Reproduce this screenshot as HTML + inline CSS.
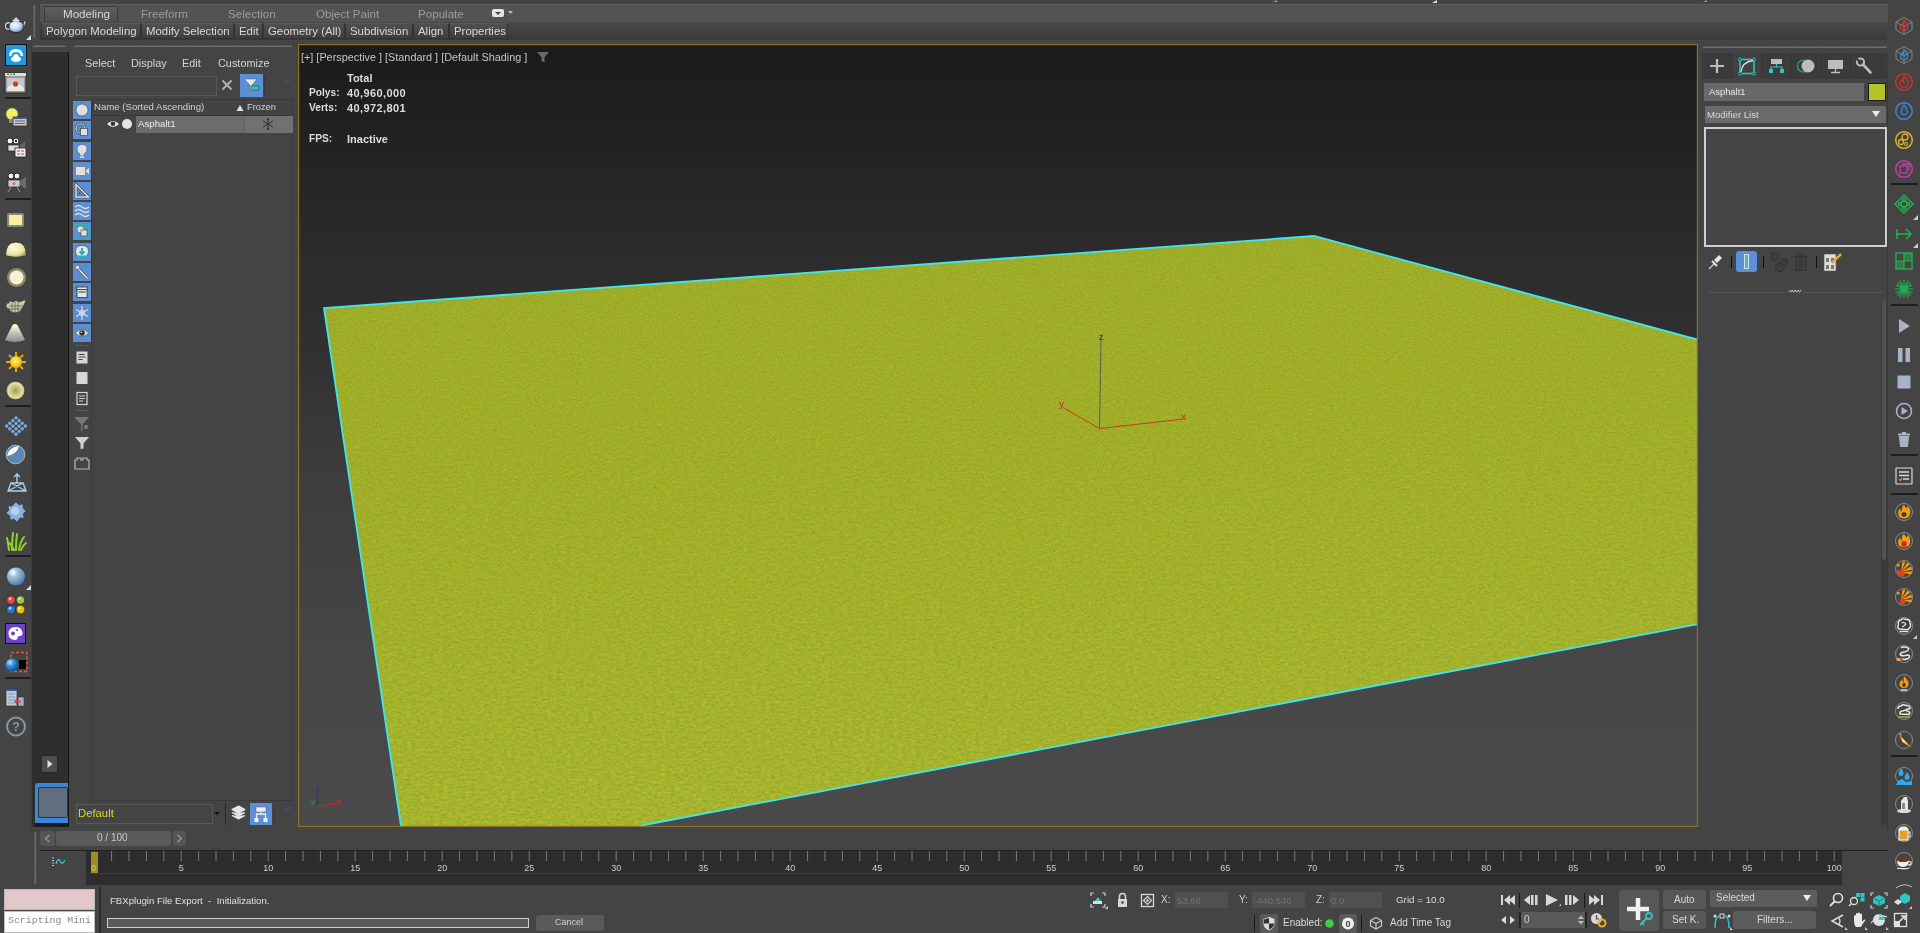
<!DOCTYPE html>
<html><head><meta charset="utf-8">
<style>
*{box-sizing:border-box;margin:0;padding:0}
html,body{width:1920px;height:933px;overflow:hidden;background:#444;font-family:"Liberation Sans",sans-serif;color:#ccc}
.a{position:absolute}
.t{position:absolute;white-space:pre;line-height:1}
</style></head><body>
<div class="a" style="left:40px;top:4px;width:1849px;height:18px;background:#535353"></div>
<div class="a" style="left:40px;top:4px;width:1849px;height:1px;background:#5e5e5e"></div>
<svg class="a" style="left:1432px;top:0px;" width="5" height="3" viewBox="0 0 5 3"><path d="M5 0V3H0Z" fill="#ddd"/></svg>
<svg class="a" style="left:1273px;top:0px;" width="4" height="2" viewBox="0 0 4 2"><path d="M4 0V2H0Z" fill="#999"/></svg>
<svg class="a" style="left:1703px;top:0px;" width="4" height="2" viewBox="0 0 4 2"><path d="M4 0V2H0Z" fill="#999"/></svg>
<div class="a" style="left:44px;top:6px;width:74px;height:16px;background:linear-gradient(#5f5f5f,#4d4d4d);border:1px solid #3c3c3c;border-bottom:none"></div>
<div class="a" style="left:40px;top:22px;width:1847px;height:18px;background:linear-gradient(#4b4b4b,#383838)"></div>
<div class="t" style="left:63px;top:8px;font-size:11.6px;color:#d6d6d6;">Modeling</div>
<div class="t" style="left:141px;top:8px;font-size:11.6px;color:#9c9c9c;">Freeform</div>
<div class="t" style="left:228px;top:8px;font-size:11.6px;color:#9c9c9c;">Selection</div>
<div class="t" style="left:316px;top:8px;font-size:11.6px;color:#9c9c9c;">Object Paint</div>
<div class="t" style="left:418px;top:8px;font-size:11.6px;color:#9c9c9c;">Populate</div>
<svg class="a" style="left:491px;top:8px;" width="22" height="10" viewBox="0 0 22 10"><rect x="1" y="1" width="12" height="8" rx="2" fill="#e6e6e6"/><path d="M4 4h6l-3 3z" fill="#444"/><path d="M17 3h5l-2.5 3z" fill="#bbb"/></svg>
<div class="a" style="left:41px;top:23px;width:100px;height:16px;background:linear-gradient(#505050,#3e3e3e);border:1px solid #333;border-top-color:#585858"></div>
<div class="t" style="left:46px;top:26px;font-size:11.4px;color:#d8d8d8;">Polygon Modeling</div>
<div class="a" style="left:141px;top:23px;width:93px;height:16px;background:linear-gradient(#505050,#3e3e3e);border:1px solid #333;border-top-color:#585858"></div>
<div class="t" style="left:146px;top:26px;font-size:11.4px;color:#d8d8d8;">Modify Selection</div>
<div class="a" style="left:234px;top:23px;width:29px;height:16px;background:linear-gradient(#505050,#3e3e3e);border:1px solid #333;border-top-color:#585858"></div>
<div class="t" style="left:239px;top:26px;font-size:11.4px;color:#d8d8d8;">Edit</div>
<div class="a" style="left:263px;top:23px;width:82px;height:16px;background:linear-gradient(#505050,#3e3e3e);border:1px solid #333;border-top-color:#585858"></div>
<div class="t" style="left:268px;top:26px;font-size:11.4px;color:#d8d8d8;">Geometry (All)</div>
<div class="a" style="left:345px;top:23px;width:68px;height:16px;background:linear-gradient(#505050,#3e3e3e);border:1px solid #333;border-top-color:#585858"></div>
<div class="t" style="left:350px;top:26px;font-size:11.4px;color:#d8d8d8;">Subdivision</div>
<div class="a" style="left:413px;top:23px;width:36px;height:16px;background:linear-gradient(#505050,#3e3e3e);border:1px solid #333;border-top-color:#585858"></div>
<div class="t" style="left:418px;top:26px;font-size:11.4px;color:#d8d8d8;">Align</div>
<div class="a" style="left:449px;top:23px;width:59px;height:16px;background:linear-gradient(#505050,#3e3e3e);border:1px solid #333;border-top-color:#585858"></div>
<div class="t" style="left:454px;top:26px;font-size:11.4px;color:#d8d8d8;">Properties</div>
<svg class="a" style="left:33px;top:5px;" width="3" height="33" viewBox="0 0 3 33"><path d="M0.5 0 L2 1.5 L0.5 3 L2 4.5 L0.5 6 L2 7.5 L0.5 9 L2 10.5 L0.5 12 L2 13.5 L0.5 15 L2 16.5 L0.5 18 L2 19.5 L0.5 21 L2 22.5 L0.5 24 L2 25.5 L0.5 27 L2 28.5 L0.5 30 L2 31.5 L0.5 33" fill="none" stroke="#9a9a9a" stroke-width="0.8"/></svg>
<svg class="a" style="left:33px;top:45px;" width="33" height="3" viewBox="0 0 33 3"><path d="M0 0.5 L1.5 2 L3 0.5 L4.5 2 L6 0.5 L7.5 2 L9 0.5 L10.5 2 L12 0.5 L13.5 2 L15 0.5 L16.5 2 L18 0.5 L19.5 2 L21 0.5 L22.5 2 L24 0.5 L25.5 2 L27 0.5 L28.5 2 L30 0.5 L31.5 2 L33 0.5" fill="none" stroke="#9a9a9a" stroke-width="0.8"/></svg>
<svg class="a" style="left:74px;top:45px;" width="218" height="3" viewBox="0 0 218 3"><path d="M0 0.5 L1.5 2 L3 0.5 L4.5 2 L6 0.5 L7.5 2 L9 0.5 L10.5 2 L12 0.5 L13.5 2 L15 0.5 L16.5 2 L18 0.5 L19.5 2 L21 0.5 L22.5 2 L24 0.5 L25.5 2 L27 0.5 L28.5 2 L30 0.5 L31.5 2 L33 0.5 L34.5 2 L36 0.5 L37.5 2 L39 0.5 L40.5 2 L42 0.5 L43.5 2 L45 0.5 L46.5 2 L48 0.5 L49.5 2 L51 0.5 L52.5 2 L54 0.5 L55.5 2 L57 0.5 L58.5 2 L60 0.5 L61.5 2 L63 0.5 L64.5 2 L66 0.5 L67.5 2 L69 0.5 L70.5 2 L72 0.5 L73.5 2 L75 0.5 L76.5 2 L78 0.5 L79.5 2 L81 0.5 L82.5 2 L84 0.5 L85.5 2 L87 0.5 L88.5 2 L90 0.5 L91.5 2 L93 0.5 L94.5 2 L96 0.5 L97.5 2 L99 0.5 L100.5 2 L102 0.5 L103.5 2 L105 0.5 L106.5 2 L108 0.5 L109.5 2 L111 0.5 L112.5 2 L114 0.5 L115.5 2 L117 0.5 L118.5 2 L120 0.5 L121.5 2 L123 0.5 L124.5 2 L126 0.5 L127.5 2 L129 0.5 L130.5 2 L132 0.5 L133.5 2 L135 0.5 L136.5 2 L138 0.5 L139.5 2 L141 0.5 L142.5 2 L144 0.5 L145.5 2 L147 0.5 L148.5 2 L150 0.5 L151.5 2 L153 0.5 L154.5 2 L156 0.5 L157.5 2 L159 0.5 L160.5 2 L162 0.5 L163.5 2 L165 0.5 L166.5 2 L168 0.5 L169.5 2 L171 0.5 L172.5 2 L174 0.5 L175.5 2 L177 0.5 L178.5 2 L180 0.5 L181.5 2 L183 0.5 L184.5 2 L186 0.5 L187.5 2 L189 0.5 L190.5 2 L192 0.5 L193.5 2 L195 0.5 L196.5 2 L198 0.5 L199.5 2 L201 0.5 L202.5 2 L204 0.5 L205.5 2 L207 0.5 L208.5 2 L210 0.5 L211.5 2 L213 0.5 L214.5 2 L216 0.5 L217.5 2 L219 0.5" fill="none" stroke="#9a9a9a" stroke-width="0.8"/></svg>
<svg class="a" style="left:1703px;top:46px;" width="184" height="3" viewBox="0 0 184 3"><path d="M0 0.5 L1.5 2 L3 0.5 L4.5 2 L6 0.5 L7.5 2 L9 0.5 L10.5 2 L12 0.5 L13.5 2 L15 0.5 L16.5 2 L18 0.5 L19.5 2 L21 0.5 L22.5 2 L24 0.5 L25.5 2 L27 0.5 L28.5 2 L30 0.5 L31.5 2 L33 0.5 L34.5 2 L36 0.5 L37.5 2 L39 0.5 L40.5 2 L42 0.5 L43.5 2 L45 0.5 L46.5 2 L48 0.5 L49.5 2 L51 0.5 L52.5 2 L54 0.5 L55.5 2 L57 0.5 L58.5 2 L60 0.5 L61.5 2 L63 0.5 L64.5 2 L66 0.5 L67.5 2 L69 0.5 L70.5 2 L72 0.5 L73.5 2 L75 0.5 L76.5 2 L78 0.5 L79.5 2 L81 0.5 L82.5 2 L84 0.5 L85.5 2 L87 0.5 L88.5 2 L90 0.5 L91.5 2 L93 0.5 L94.5 2 L96 0.5 L97.5 2 L99 0.5 L100.5 2 L102 0.5 L103.5 2 L105 0.5 L106.5 2 L108 0.5 L109.5 2 L111 0.5 L112.5 2 L114 0.5 L115.5 2 L117 0.5 L118.5 2 L120 0.5 L121.5 2 L123 0.5 L124.5 2 L126 0.5 L127.5 2 L129 0.5 L130.5 2 L132 0.5 L133.5 2 L135 0.5 L136.5 2 L138 0.5 L139.5 2 L141 0.5 L142.5 2 L144 0.5 L145.5 2 L147 0.5 L148.5 2 L150 0.5 L151.5 2 L153 0.5 L154.5 2 L156 0.5 L157.5 2 L159 0.5 L160.5 2 L162 0.5 L163.5 2 L165 0.5 L166.5 2 L168 0.5 L169.5 2 L171 0.5 L172.5 2 L174 0.5 L175.5 2 L177 0.5 L178.5 2 L180 0.5 L181.5 2 L183 0.5 L184.5 2 L186 0.5" fill="none" stroke="#9a9a9a" stroke-width="0.8"/></svg>
<svg class="a" style="left:1891px;top:4px;" width="26" height="3" viewBox="0 0 26 3"><path d="M0 0.5 L1.5 2 L3 0.5 L4.5 2 L6 0.5 L7.5 2 L9 0.5 L10.5 2 L12 0.5 L13.5 2 L15 0.5 L16.5 2 L18 0.5 L19.5 2 L21 0.5 L22.5 2 L24 0.5 L25.5 2 L27 0.5" fill="none" stroke="#9a9a9a" stroke-width="0.8"/></svg>
<div class="a" style="left:25px;top:52px;width:1px;height:780px;background:#474747"></div>
<div class="a" style="left:31px;top:40px;width:1px;height:793px;background:#3c3c3c"></div>
<div class="a" style="left:5px;top:97px;width:26px;height:2px;background:#1e1e1e"></div>
<div class="a" style="left:5px;top:198px;width:26px;height:2px;background:#1e1e1e"></div>
<div class="a" style="left:5px;top:405px;width:26px;height:2px;background:#1e1e1e"></div>
<div class="a" style="left:5px;top:555px;width:26px;height:2px;background:#1e1e1e"></div>
<div class="a" style="left:5px;top:677px;width:26px;height:2px;background:#1e1e1e"></div>
<svg class="a" style="left:0;top:0" width="0" height="0"><defs>
<radialGradient id="gTea" cx="40%" cy="35%" r="70%"><stop offset="0" stop-color="#ffffff"/><stop offset="0.6" stop-color="#b8d0ec"/><stop offset="1" stop-color="#5d7fa8"/></radialGradient>
<radialGradient id="gYel" cx="40%" cy="35%" r="70%"><stop offset="0" stop-color="#fffde0"/><stop offset="0.7" stop-color="#e8e2a0"/><stop offset="1" stop-color="#9a9460"/></radialGradient>
<radialGradient id="gYel2" cx="50%" cy="50%" r="50%"><stop offset="0" stop-color="#a09c60"/><stop offset="0.8" stop-color="#e9e2a0"/><stop offset="1" stop-color="#7a7550"/></radialGradient>
<radialGradient id="gBlu" cx="35%" cy="30%" r="70%"><stop offset="0" stop-color="#ffffff"/><stop offset="0.35" stop-color="#9ec0dc"/><stop offset="1" stop-color="#4f7ea8"/></radialGradient>
<radialGradient id="gBlu2" cx="35%" cy="30%" r="70%"><stop offset="0" stop-color="#c8e8ff"/><stop offset="0.4" stop-color="#3b93e0"/><stop offset="1" stop-color="#0c4fa0"/></radialGradient>
<radialGradient id="gSun" cx="45%" cy="40%" r="60%"><stop offset="0" stop-color="#fff27a"/><stop offset="1" stop-color="#f0b000"/></radialGradient>
<linearGradient id="gCone" x1="0" y1="0" x2="0" y2="1"><stop offset="0" stop-color="#ffffe8"/><stop offset="1" stop-color="#8a8a8a"/></linearGradient>
</defs></svg>
<svg class="a" style="left:4px;top:17px;" width="24" height="18" viewBox="0 0 24 18"><ellipse cx="4.5" cy="9" rx="3" ry="3.3" fill="none" stroke="#222" stroke-width="2.6"/><ellipse cx="4.5" cy="9" rx="3" ry="3.3" fill="none" stroke="#c8d4e0" stroke-width="1.4"/><path d="M16 11 Q19 9 20 4 L22.5 3 Q21.5 9 17 14Z" fill="url(#gTea)" stroke="#222" stroke-width="0.7"/><path d="M5 9 Q5 4 12 4 Q19.5 4 19.5 9 Q19.5 15.5 12 15.5 Q5 15.5 5 9Z" fill="url(#gTea)" stroke="#222" stroke-width="0.8"/><ellipse cx="12" cy="3.5" rx="3.5" ry="1.2" fill="#dfe8f2"/><circle cx="12" cy="1.8" r="1.3" fill="#cfdcec"/></svg>
<svg class="a" style="left:26px;top:35px;" width="5" height="5" viewBox="0 0 5 5"><path d="M5 0V5H0Z" fill="#ddd"/></svg>
<svg class="a" style="left:5px;top:44px;" width="22" height="22" viewBox="0 0 22 22"><rect x="0.5" y="0.5" width="21" height="21" fill="#1d9be0" stroke="#111" stroke-width="1"/><path d="M4 12 Q4 5 11 5 Q18 5 18 12 L15.5 12 Q15.5 8 11 8 Q6.5 8 6.5 12Z" fill="#fff"/><ellipse cx="11" cy="15" rx="5" ry="3" fill="#fff"/><circle cx="11" cy="12.5" r="2.5" fill="#fff"/></svg>
<svg class="a" style="left:4px;top:72px;" width="23" height="23" viewBox="0 0 23 23"><rect x="1" y="1" width="21" height="20" fill="#9a9a9a" stroke="#2a2a2a"/><rect x="1" y="1" width="21" height="3" fill="#e0e0e0"/><rect x="3" y="1.5" width="2" height="1.5" fill="#e33"/><rect x="6" y="1.5" width="2" height="1.5" fill="#3c3"/><rect x="9" y="1.5" width="2" height="1.5" fill="#36e"/><path d="M3 6h17v13H3z" fill="#c4c8cc"/><path d="M3 16 L8 12 H15 L20 16 V19 H3Z" fill="#e8e8e8"/><circle cx="11.5" cy="12" r="2.6" fill="#d63a1e"/></svg>
<svg class="a" style="left:4px;top:107px;" width="24" height="22" viewBox="0 0 24 22"><circle cx="8" cy="7" r="6" fill="#f3ee60" stroke="#777" stroke-width="0.6"/><path d="M5 12h6v4H5z" fill="#888"/><rect x="9" y="10" width="14" height="9" fill="#c9c9c9" stroke="#333" stroke-width="0.8"/><rect x="9" y="10" width="14" height="2" fill="#3a5aa0"/><path d="M11 14h10M11 16.5h10" stroke="#666" stroke-width="1"/></svg>
<svg class="a" style="left:4px;top:136px;" width="24" height="22" viewBox="0 0 24 22"><circle cx="6" cy="5" r="3" fill="#fff" stroke="#222"/><circle cx="12" cy="5" r="3" fill="#fff" stroke="#222"/><circle cx="12" cy="5" r="1.2" fill="#222"/><rect x="4" y="9" width="11" height="6" fill="#ddd" stroke="#222" stroke-width="0.7"/><path d="M16 9 L21 6 V15 L16 12Z" fill="#666"/><rect x="11" y="12" width="11" height="9" fill="#eee" stroke="#222" stroke-width="0.8"/><path d="M13 15h3M17 15h3M13 18h3M17 18h3" stroke="#c44" stroke-width="1"/></svg>
<svg class="a" style="left:4px;top:171px;" width="24" height="22" viewBox="0 0 24 22"><circle cx="7" cy="5" r="3" fill="#eee" stroke="#222"/><circle cx="13" cy="5" r="3" fill="#eee" stroke="#222"/><rect x="4" y="9" width="12" height="7" fill="#ccc" stroke="#222" stroke-width="0.7"/><path d="M16 10 L22 6 V18 L16 14Z" fill="#6a6a6a"/><path d="M7 16 L4 21 M13 16 L16 21" stroke="#999" stroke-width="1"/><circle cx="10" cy="12.5" r="1.5" fill="#d66"/></svg>
<svg class="a" style="left:5px;top:211px;" width="22" height="18" viewBox="0 0 22 18"><rect x="2" y="2" width="17" height="14" fill="#8a8a70" rx="2"/><rect x="4" y="4" width="13" height="10" fill="#f6efa0"/></svg>
<svg class="a" style="left:4px;top:240px;" width="24" height="19" viewBox="0 0 24 19"><path d="M1.5 16 Q1.5 2 12 2 Q22.5 2 22.5 16 Q12 19 1.5 16Z" fill="url(#gYel)" stroke="#222" stroke-width="0.8"/></svg>
<svg class="a" style="left:6px;top:267px;" width="21" height="21" viewBox="0 0 21 21"><circle cx="10.5" cy="10.5" r="9.5" fill="#8a8a70"/><circle cx="10.5" cy="10.5" r="7" fill="#f7f3d0"/></svg>
<svg class="a" style="left:4px;top:298px;" width="24" height="17" viewBox="0 0 24 17"><path d="M5 5 Q4 2 7 3 L9 4 Q12 1 15 4 L20 2 Q23 2 21 5 L18 11 Q16 15 11 15 Q6 15 5 11 Q1 10 2 7 Q3 4 5 5Z" fill="#cfc9a8" stroke="#333" stroke-width="0.8"/><path d="M8 5V14M11 4V15M14 5V14M5 8h15M5 11h14" stroke="#555" stroke-width="0.7"/></svg>
<svg class="a" style="left:4px;top:322px;" width="22" height="22" viewBox="0 0 22 22"><path d="M11 2 Q9 2 8 4 L1 18 Q11 22 21 18 L14 4 Q13 2 11 2Z" fill="url(#gCone)"/><circle cx="11" cy="4" r="2" fill="#fff8c0"/></svg>
<svg class="a" style="left:5px;top:351px;" width="22" height="22" viewBox="0 0 22 22"><g stroke="#e8a800" stroke-width="2"><path d="M11 1V5M11 17V21M1 11H5M17 11H21M4 4L6.5 6.5M15.5 15.5L18 18M18 4L15.5 6.5M6.5 15.5L4 18"/></g><circle cx="11" cy="11" r="6" fill="url(#gSun)"/></svg>
<svg class="a" style="left:5px;top:380px;" width="21" height="21" viewBox="0 0 21 21"><circle cx="10.5" cy="10.5" r="9.5" fill="url(#gYel2)" stroke="#333" stroke-width="0.7"/></svg>
<svg class="a" style="left:4px;top:415px;" width="24" height="22" viewBox="0 0 24 22"><circle cx="12.0" cy="3.0" r="2.1" fill="#86aed4" stroke="#2a3a4a" stroke-width="0.6"/><circle cx="15.1" cy="5.7" r="2.1" fill="#86aed4" stroke="#2a3a4a" stroke-width="0.6"/><circle cx="18.2" cy="8.4" r="2.1" fill="#86aed4" stroke="#2a3a4a" stroke-width="0.6"/><circle cx="21.3" cy="11.1" r="2.1" fill="#86aed4" stroke="#2a3a4a" stroke-width="0.6"/><circle cx="8.9" cy="5.7" r="2.1" fill="#86aed4" stroke="#2a3a4a" stroke-width="0.6"/><circle cx="12.0" cy="8.4" r="2.1" fill="#86aed4" stroke="#2a3a4a" stroke-width="0.6"/><circle cx="15.1" cy="11.1" r="2.1" fill="#86aed4" stroke="#2a3a4a" stroke-width="0.6"/><circle cx="18.2" cy="13.8" r="2.1" fill="#86aed4" stroke="#2a3a4a" stroke-width="0.6"/><circle cx="5.8" cy="8.4" r="2.1" fill="#86aed4" stroke="#2a3a4a" stroke-width="0.6"/><circle cx="8.9" cy="11.1" r="2.1" fill="#86aed4" stroke="#2a3a4a" stroke-width="0.6"/><circle cx="12.0" cy="13.8" r="2.1" fill="#86aed4" stroke="#2a3a4a" stroke-width="0.6"/><circle cx="15.1" cy="16.5" r="2.1" fill="#86aed4" stroke="#2a3a4a" stroke-width="0.6"/><circle cx="2.7" cy="11.1" r="2.1" fill="#86aed4" stroke="#2a3a4a" stroke-width="0.6"/><circle cx="5.8" cy="13.8" r="2.1" fill="#86aed4" stroke="#2a3a4a" stroke-width="0.6"/><circle cx="8.9" cy="16.5" r="2.1" fill="#86aed4" stroke="#2a3a4a" stroke-width="0.6"/><circle cx="12.0" cy="19.2" r="2.1" fill="#86aed4" stroke="#2a3a4a" stroke-width="0.6"/></svg>
<svg class="a" style="left:5px;top:444px;" width="21" height="21" viewBox="0 0 21 21"><circle cx="10.5" cy="10.5" r="9.3" fill="#5a88b0" stroke="#ccc" stroke-width="0.8"/><path d="M2 12 Q4 3 14 2 Q12 10 2 12Z" fill="#fff"/></svg>
<svg class="a" style="left:6px;top:472px;" width="22" height="22" viewBox="0 0 22 22"><g stroke="#a8d0ee" stroke-width="1.4" fill="none"><path d="M2 19 H20 L17 11 H5Z M5 11 L20 19 M17 11 L2 19 M11 2 V11 M8 5 L11 2 L14 5"/></g></svg>
<svg class="a" style="left:5px;top:501px;" width="22" height="22" viewBox="0 0 22 22"><path d="M11 1 L14 4 L18 3 L18 7 L21 10 L18 13 L19 17 L15 17 L12 21 L9 18 L5 19 L5 15 L1 12 L4 9 L3 5 L7 5Z" fill="#8bb0e0" stroke="#333" stroke-width="0.5"/><circle cx="10" cy="10" r="4" fill="#b8d0f0"/></svg>
<svg class="a" style="left:5px;top:530px;" width="22" height="22" viewBox="0 0 22 22"><g stroke="#8fd32a" stroke-width="2" fill="none" stroke-linecap="round"><path d="M4 20 Q3 12 2 8 M7 20 Q7 10 8 3 M11 20 Q11 12 12 4 M14 20 Q15 12 19 7 M9 20 Q6 14 4 13 M16 20 Q18 15 21 13"/></g></svg>
<svg class="a" style="left:5px;top:566px;" width="22" height="22" viewBox="0 0 22 22"><circle cx="11" cy="10.5" r="9.5" fill="url(#gBlu)" stroke="#333" stroke-width="0.7"/></svg>
<svg class="a" style="left:26px;top:585px;" width="5" height="5" viewBox="0 0 5 5"><path d="M5 0V5H0Z" fill="#ddd"/></svg>
<svg class="a" style="left:6px;top:595px;" width="20" height="20" viewBox="0 0 20 20"><circle cx="5" cy="5" r="4.3" fill="#e84848" stroke="#222" stroke-width="0.6"/><circle cx="14.5" cy="5" r="4.3" fill="#9cc040" stroke="#222" stroke-width="0.6"/><circle cx="5" cy="14.5" r="4.3" fill="#2a78d8" stroke="#222" stroke-width="0.6"/><circle cx="14.5" cy="14.5" r="4.3" fill="#f0c000" stroke="#222" stroke-width="0.6"/><circle cx="4" cy="3.8" r="1.3" fill="#fff" opacity="0.8"/><circle cx="13.5" cy="3.8" r="1.3" fill="#fff" opacity="0.7"/><circle cx="4" cy="13.3" r="1.3" fill="#fff" opacity="0.7"/><circle cx="13.5" cy="13.3" r="1.3" fill="#fff" opacity="0.7"/></svg>
<svg class="a" style="left:5px;top:623px;" width="22" height="22" viewBox="0 0 22 22"><rect x="0.5" y="0.5" width="20" height="20" fill="#6b42c4" stroke="#111"/><path d="M10.5 4 Q17 4 17.5 10 Q17.5 13 15 13 Q12 13 12.5 16 Q11 17 10 17 Q3.5 17 3.5 10.5 Q3.5 4 10.5 4Z" fill="#fff"/><circle cx="8" cy="10.5" r="2" fill="#6b42c4"/><circle cx="12" cy="7" r="1" fill="#6b42c4"/></svg>
<svg class="a" style="left:4px;top:651px;" width="24" height="24" viewBox="0 0 24 24"><rect x="7" y="1.5" width="16" height="19" fill="none" stroke="#e53" stroke-width="1.5" stroke-dasharray="3 2"/><rect x="15" y="9" width="7" height="9" fill="#000"/><circle cx="8" cy="14" r="6.5" fill="url(#gBlu2)"/></svg>
<svg class="a" style="left:5px;top:688px;" width="22" height="20" viewBox="0 0 22 20"><rect x="1" y="1" width="11" height="17" fill="#c8c8c8" stroke="#333" stroke-width="0.7"/><rect x="1" y="1" width="11" height="2" fill="#2d5ab8"/><path d="M3 6h7M3 9h7M3 12h7M3 15h7" stroke="#6aa0e0" stroke-width="1"/><rect x="13" y="9" width="6" height="9" fill="#aac" stroke="#333" stroke-width="0.5"/><path d="M16 13.5H10M12 11.5L10 13.5L12 15.5" stroke="#e33" stroke-width="1.5" fill="none"/></svg>
<svg class="a" style="left:5px;top:716px;" width="22" height="22" viewBox="0 0 22 22"><circle cx="11" cy="10.5" r="9" fill="none" stroke="#8a95a0" stroke-width="2"/><text x="11" y="15" text-anchor="middle" font-family="Liberation Sans" font-weight="bold" font-size="13" fill="#8a95a0">?</text></svg>
<div class="a" style="left:32px;top:52px;width:37px;height:775px;background:#2e2e2e"></div>
<div class="a" style="left:68px;top:52px;width:1px;height:775px;background:#141414"></div>
<div class="a" style="left:41px;top:755px;width:17px;height:18px;background:#4d4d4d;border-radius:2px;border:1px solid #272727"></div>
<svg class="a" style="left:41px;top:755px;" width="17" height="18" viewBox="0 0 17 18"><path d="M6.5 5 L11.5 9 L6.5 13Z" fill="#e0e0e0"/></svg>
<div class="a" style="left:35px;top:783px;width:33px;height:42px;background:#3c85d8;border-radius:3px 0 0 0"></div>
<div class="a" style="left:38px;top:787px;width:30px;height:31px;background:#5f6f80;border:1px solid #2a3540;border-radius:2px"></div>
<div class="a" style="left:35px;top:823px;width:33px;height:4px;background:#1c1c1c"></div>
<div class="a" style="left:69px;top:52px;width:227px;height:775px;background:#444"></div>
<div class="t" style="left:85px;top:58px;font-size:10.9px;color:#d4d4d4;">Select</div>
<div class="t" style="left:131px;top:58px;font-size:10.9px;color:#d4d4d4;">Display</div>
<div class="t" style="left:182px;top:58px;font-size:10.9px;color:#d4d4d4;">Edit</div>
<div class="t" style="left:218px;top:58px;font-size:10.9px;color:#d4d4d4;">Customize</div>
<div class="a" style="left:76px;top:76px;width:141px;height:20px;background:#444;border:1px solid #595959"></div>
<svg class="a" style="left:220px;top:78px;" width="14" height="14" viewBox="0 0 14 14"><path d="M2.5 2.5L11.5 11.5M11.5 2.5L2.5 11.5" stroke="#b0b0b0" stroke-width="2"/></svg>
<div class="a" style="left:240px;top:74px;width:23px;height:23px;background:#5b8fd6"></div>
<svg class="a" style="left:240px;top:74px;" width="23" height="23" viewBox="0 0 23 23"><path d="M4 5H17L12 11V16L10 17V11Z" fill="#e8e8e8" stroke="#555" stroke-width="0.5"/><rect x="11" y="12" width="8" height="4" fill="#2bc7c0" stroke="#333" stroke-width="0.5"/></svg>
<div class="a" style="left:264px;top:76px;width:1px;height:20px;background:#3a3a3a"></div>
<div class="t" style="left:284px;top:74px;font-size:12px;color:#434d88;">»</div>
<div class="a" style="left:73px;top:101px;width:18px;height:18px;background:#5b8ed3"></div>
<svg class="a" style="left:73px;top:101px;" width="18" height="18" viewBox="0 0 18 18"><circle cx="9" cy="9" r="6" fill="#e0e0e0" stroke="#444" stroke-width="0.6"/></svg>
<div class="a" style="left:73px;top:121px;width:18px;height:18px;background:#5b8ed3"></div>
<svg class="a" style="left:73px;top:121px;" width="18" height="18" viewBox="0 0 18 18"><circle cx="7.5" cy="7.5" r="4.5" fill="none" stroke="#444" stroke-width="2.4"/><circle cx="7.5" cy="7.5" r="4.5" fill="none" stroke="#e0e0e0" stroke-width="1.2"/><rect x="7.5" y="7.5" width="7" height="7" fill="#e0e0e0" stroke="#444" stroke-width="0.7"/></svg>
<div class="a" style="left:73px;top:142px;width:18px;height:18px;background:#5b8ed3"></div>
<svg class="a" style="left:73px;top:142px;" width="18" height="18" viewBox="0 0 18 18"><path d="M9 2.5 Q14 2.5 14 7 Q14 10 11 12 V14 H7 V12 Q4 10 4 7 Q4 2.5 9 2.5Z" fill="#e0e0e0" stroke="#555" stroke-width="0.5"/><rect x="7" y="14.5" width="4" height="1.5" fill="#e0e0e0"/></svg>
<div class="a" style="left:73px;top:162px;width:18px;height:18px;background:#5b8ed3"></div>
<svg class="a" style="left:73px;top:162px;" width="18" height="18" viewBox="0 0 18 18"><rect x="2.5" y="4.5" width="10" height="9" rx="1" fill="#e0e0e0" stroke="#555" stroke-width="0.5"/><path d="M12.5 9 L16 5.5 V12.5Z" fill="#e0e0e0"/></svg>
<div class="a" style="left:73px;top:182px;width:18px;height:18px;background:#5b8ed3"></div>
<svg class="a" style="left:73px;top:182px;" width="18" height="18" viewBox="0 0 18 18"><path d="M3 2.5 V15 H15.5Z" fill="none" stroke="#333" stroke-width="2.6"/><path d="M3 2.5 V15 H15.5Z" fill="none" stroke="#e8e8e8" stroke-width="1.5"/><path d="M6 10 V12 H8Z" fill="#333"/></svg>
<div class="a" style="left:73px;top:202px;width:18px;height:18px;background:#5b8ed3"></div>
<svg class="a" style="left:73px;top:202px;" width="18" height="18" viewBox="0 0 18 18"><path d="M2 5 Q5.5 2 9 5 T16 5 M2 9 Q5.5 6 9 9 T16 9 M2 13 Q5.5 10 9 13 T16 13" fill="none" stroke="#e0e0e0" stroke-width="1.4"/></svg>
<div class="a" style="left:73px;top:222px;width:18px;height:18px;background:#5b8ed3"></div>
<svg class="a" style="left:73px;top:222px;" width="18" height="18" viewBox="0 0 18 18"><rect x="2.5" y="2.5" width="13" height="13" fill="none" stroke="#27b8a8" stroke-width="1.3"/><circle cx="7.5" cy="7.5" r="3.5" fill="#e0e0e0" stroke="#444" stroke-width="0.5"/><rect x="8" y="8" width="6" height="6" fill="#e0e0e0" stroke="#444" stroke-width="0.6"/></svg>
<div class="a" style="left:73px;top:243px;width:18px;height:18px;background:#5b8ed3"></div>
<svg class="a" style="left:73px;top:243px;" width="18" height="18" viewBox="0 0 18 18"><path d="M4.5 13 Q2.5 11 2.5 8.5 Q2.5 2.5 9 2.5 Q15.5 2.5 15.5 8.5 Q15.5 11 13.5 13" fill="#e6e6e6" stroke="#444" stroke-width="0.6"/><path d="M9 5 V11 M6.5 8.5 L9 11 L11.5 8.5" stroke="#22b8b0" stroke-width="2" fill="none"/><rect x="4.5" y="12.5" width="9" height="2.2" fill="#22b8b0"/></svg>
<div class="a" style="left:73px;top:263px;width:18px;height:18px;background:#5b8ed3"></div>
<svg class="a" style="left:73px;top:263px;" width="18" height="18" viewBox="0 0 18 18"><path d="M4.5 5 L14.5 15.5" stroke="#444" stroke-width="2.8"/><path d="M4.5 5 L14.5 15.5" stroke="#e6e6e6" stroke-width="1.8"/><circle cx="4.5" cy="4.5" r="2.2" fill="#e6e6e6" stroke="#444" stroke-width="0.6"/></svg>
<div class="a" style="left:73px;top:283px;width:18px;height:18px;background:#5b8ed3"></div>
<svg class="a" style="left:73px;top:283px;" width="18" height="18" viewBox="0 0 18 18"><rect x="3.5" y="4" width="11" height="2.5" fill="#e6e6e6" stroke="#333" stroke-width="0.8"/><rect x="4" y="6.5" width="10" height="8" fill="#e6e6e6" stroke="#333" stroke-width="0.8"/><path d="M5.5 9 H12.5" stroke="#333" stroke-width="1"/></svg>
<div class="a" style="left:73px;top:304px;width:18px;height:18px;background:#5b8ed3"></div>
<svg class="a" style="left:73px;top:304px;" width="18" height="18" viewBox="0 0 18 18"><g stroke="#e0e0e0" stroke-width="1.1" fill="none"><path d="M9 2V16M3 5.5L15 12.5M15 5.5L3 12.5"/><circle cx="9" cy="9" r="2.5"/></g></svg>
<div class="a" style="left:73px;top:324px;width:18px;height:18px;background:#5b8ed3"></div>
<svg class="a" style="left:73px;top:324px;" width="18" height="18" viewBox="0 0 18 18"><path d="M2 9 Q9 2 16 9 Q9 16 2 9Z" fill="#e0e0e0" stroke="#333" stroke-width="0.5"/><circle cx="9" cy="9" r="2.8" fill="#333"/><circle cx="8.3" cy="8.3" r="0.8" fill="#fff"/></svg>
<div class="a" style="left:76px;top:345px;width:12px;height:1px;background:#5a5a5a"></div>
<svg class="a" style="left:74px;top:349px;" width="16" height="18" viewBox="0 0 16 18"><rect x="2.5" y="2.5" width="11" height="12" fill="#d6d6d6"/><path d="M4.5 5.5h6M4.5 8h7M4.5 10.5h4" stroke="#444" stroke-width="1.2"/></svg>
<svg class="a" style="left:74px;top:370px;" width="16" height="18" viewBox="0 0 16 18"><rect x="2.5" y="2" width="11" height="12" fill="#d6d6d6"/></svg>
<svg class="a" style="left:74px;top:390px;" width="16" height="18" viewBox="0 0 16 18"><rect x="3" y="2.5" width="10" height="12" fill="none" stroke="#d6d6d6" stroke-width="1.2"/><path d="M5 6h6M5 8.5h6M5 11h4" stroke="#d6d6d6" stroke-width="1.1"/></svg>
<div class="a" style="left:76px;top:410px;width:12px;height:1px;background:#5a5a5a"></div>
<svg class="a" style="left:73px;top:415px;" width="18" height="17" viewBox="0 0 18 17"><path d="M1 2H16L10 9V15L8 16V9Z" fill="#777"/><circle cx="13" cy="12" r="3" fill="#777" stroke="#444" stroke-width="1.5"/></svg>
<svg class="a" style="left:73px;top:436px;" width="18" height="14" viewBox="0 0 18 14"><path d="M2 1H16L10.5 7.5V12.5L7.5 13V7.5Z" fill="#d0d0d0"/></svg>
<svg class="a" style="left:73px;top:455px;" width="18" height="16" viewBox="0 0 18 16"><path d="M2 14V5H4V3H8V5H10V3H14V5H16V14Z" fill="none" stroke="#b8b8b8" stroke-width="1.2"/></svg>
<div class="a" style="left:91px;top:99px;width:202px;height:702px;border:1px solid #3a3a3a;border-top:none"></div>
<div class="a" style="left:92px;top:99px;width:201px;height:17px;background:#434343;border:1px solid #383838"></div>
<div class="t" style="left:94px;top:102px;font-size:9.65px;color:#d4d4d4;">Name (Sorted Ascending)</div>
<svg class="a" style="left:236px;top:104px;" width="8" height="8" viewBox="0 0 8 8"><path d="M4 1 L7.5 7 H0.5Z" fill="#e0e0e0"/></svg>
<div class="a" style="left:244px;top:99px;width:1px;height:17px;background:#383838"></div>
<div class="t" style="left:247px;top:103px;font-size:9.3px;color:#d4d4d4;">Frozen</div>
<div class="a" style="left:136px;top:116px;width:157px;height:17px;background:#6c6c6c"></div>
<div class="a" style="left:244px;top:116px;width:1px;height:17px;background:#606060"></div>
<div class="a" style="left:245px;top:116px;width:48px;height:17px;background:#717171"></div>
<svg class="a" style="left:104px;top:117px;" width="30" height="14" viewBox="0 0 30 14"><path d="M3 7 Q9 1 15 7 Q9 13 3 7Z" fill="#e8e8e8"/><circle cx="9" cy="6.8" r="2.3" fill="#333"/><circle cx="23" cy="7" r="5" fill="#e4e4e4"/></svg>
<div class="t" style="left:138px;top:119px;font-size:9.7px;color:#ececec;">Asphalt1</div>
<svg class="a" style="left:261px;top:117px;" width="14" height="14" viewBox="0 0 14 14"><g stroke="#2e2e2e" stroke-width="1" fill="none"><path d="M7 1V13M2.2 4L11.8 10M11.8 4L2.2 10M5.5 1.5L7 3L8.5 1.5M5.5 12.5L7 11L8.5 12.5"/></g></svg>
<div class="a" style="left:76px;top:804px;width:137px;height:20px;background:#444;border:1px solid #585858"></div>
<div class="t" style="left:78px;top:808px;font-size:11.3px;color:#d8d820;">Default</div>
<svg class="a" style="left:213px;top:809px;" width="8" height="8" viewBox="0 0 8 8"><path d="M1 3H7L4 6Z" fill="#111"/></svg>
<div class="a" style="left:225px;top:803px;width:1px;height:22px;background:#2a2a2a"></div>
<svg class="a" style="left:230px;top:804px;" width="17" height="17" viewBox="0 0 17 17"><path d="M8.5 2L15 5.5L8.5 9L2 5.5Z M2 8.5L8.5 12L15 8.5 M2 11.5L8.5 15L15 11.5" fill="#e6e6e6" stroke="#e6e6e6" stroke-width="1.2" stroke-linejoin="round"/></svg>
<div class="a" style="left:250px;top:803px;width:22px;height:22px;background:#5b8fd6"></div>
<svg class="a" style="left:250px;top:803px;" width="22" height="22" viewBox="0 0 22 22"><rect x="6" y="4" width="10" height="5" fill="#f0f0f0" stroke="#555" stroke-width="0.5"/><path d="M11 9V11M6.5 16V11H15.5V16" stroke="#f0f0f0" stroke-width="1.3" fill="none"/><rect x="4.5" y="15" width="4" height="4" fill="#f0f0f0"/><rect x="13.5" y="15" width="4" height="4" fill="#f0f0f0"/></svg>
<div class="a" style="left:274px;top:805px;width:1px;height:19px;background:#3a3a3a"></div>
<div class="t" style="left:284px;top:802px;font-size:12px;color:#434d88;">»</div>
<svg class="a" style="left:298px;top:44px;" width="1400" height="783" viewBox="0 0 1400 783"><defs>
<linearGradient id="vbg" x1="0" y1="0" x2="0" y2="1">
 <stop offset="0" stop-color="#1b1b1b"/><stop offset="0.14" stop-color="#232323"/><stop offset="0.276" stop-color="#2c2c2c"/><stop offset="0.383" stop-color="#303030"/><stop offset="0.5" stop-color="#3a3a3a"/><stop offset="0.8" stop-color="#474747"/><stop offset="1" stop-color="#4a4a4a"/>
</linearGradient>
<linearGradient id="pl" x1="0" y1="0" x2="0.15" y2="1">
 <stop offset="0" stop-color="#9dac27"/><stop offset="0.5" stop-color="#a0af28"/><stop offset="1" stop-color="#a5b42d"/>
</linearGradient>
<filter id="nz" x="0" y="0" width="100%" height="100%" color-interpolation-filters="sRGB">
 <feTurbulence type="fractalNoise" baseFrequency="0.6" numOctaves="3" seed="7" result="t"/>
 <feColorMatrix type="matrix" values="1 0 0 0 0  1 0 0 0 0  1 0 0 0 0  0 0 0 0 1" />
</filter>
<filter id="nz2" x="0" y="0" width="100%" height="100%" color-interpolation-filters="sRGB">
 <feTurbulence type="fractalNoise" baseFrequency="0.22 0.4" numOctaves="2" seed="11"/>
 <feColorMatrix type="matrix" values="1 0 0 0 0  1 0 0 0 0  1 0 0 0 0  0 0 0 0 1" />
</filter>
<linearGradient id="mk" x1="0" y1="0" x2="0" y2="1"><stop offset="0.25" stop-color="#fff" stop-opacity="0.15"/><stop offset="1" stop-color="#fff" stop-opacity="1"/></linearGradient>
<mask id="mm"><rect x="0" y="0" width="1400" height="783" fill="url(#mk)"/></mask>
<clipPath id="pc"><polygon points="26,264 1016,192 1401,296 1401,580 341,782 103,782"/></clipPath>
</defs>
<rect x="0" y="0" width="1400" height="783" fill="url(#vbg)"/>
<polygon points="26,264 1016,192 1401,296 1401,580 341,782 103,782" fill="url(#pl)"/>
<g clip-path="url(#pc)" opacity="0.18" style="mix-blend-mode:overlay"><rect x="0" y="0" width="1400" height="783" filter="url(#nz)"/></g>
<g clip-path="url(#pc)" opacity="0.22" style="mix-blend-mode:overlay"><rect x="0" y="0" width="1400" height="783" filter="url(#nz2)" mask="url(#mm)"/></g>
<polyline points="103,782 26,264 1016,192 1401,296" fill="none" stroke="#3ee6f2" stroke-width="1.8"/>
<polyline points="1401,580 341,782" fill="none" stroke="#3ee6f2" stroke-width="1.8"/>
<rect x="0.6" y="0.6" width="1398.8" height="781.8" fill="none" stroke="#8c7030" stroke-width="1.2"/>
<path d="M801.5 384.6 L803 295.5" stroke="#5a5a5a" stroke-width="1"/><path d="M764.5999999999999 363.2 L801.5 384.6 L883.8 375.2" stroke="#d0381e" stroke-width="1" fill="none"/><text x="801" y="296" font-family="Liberation Sans" font-size="9" font-weight="bold" fill="#4a4a4a">z</text><text x="761" y="363" font-family="Liberation Sans" font-size="9" font-weight="bold" fill="#b84a28">y</text><text x="883" y="376" font-family="Liberation Sans" font-size="9" font-weight="bold" fill="#b84a28">x</text><path d="M19.5 762 L19.5 744" stroke="#1a2fe0" stroke-width="1.2"/><path d="M20 762 L29 761 L38 760" stroke="#d02020" stroke-width="1.2" fill="none"/><text x="13" y="760" font-family="Liberation Sans" font-size="8" fill="#20a030">y</text><text x="18" y="744" font-family="Liberation Sans" font-size="8" font-weight="bold" fill="#2a3ae8">Z</text><text x="38" y="761" font-family="Liberation Sans" font-size="8" fill="#e03030">X</text></svg>
<div class="t" style="left:301px;top:52px;font-size:10.85px;color:#c4c4c4;">[+] [Perspective ] [Standard ] [Default Shading ]</div>
<svg class="a" style="left:536px;top:51px;" width="14" height="12" viewBox="0 0 14 12"><path d="M1 1H13L8.5 6V11.5L5.5 10V6Z" fill="#6a6a6a"/></svg>
<div class="t" style="left:347px;top:73px;font-size:11px;color:#dcdcdc;font-weight:bold">Total</div>
<div class="t" style="left:309px;top:88px;font-size:10.2px;color:#dcdcdc;font-weight:bold">Polys:</div>
<div class="t" style="left:347px;top:88px;font-size:11px;color:#dcdcdc;font-weight:bold;letter-spacing:0.4px">40,960,000</div>
<div class="t" style="left:309px;top:103px;font-size:10.2px;color:#dcdcdc;font-weight:bold">Verts:</div>
<div class="t" style="left:347px;top:103px;font-size:11px;color:#dcdcdc;font-weight:bold;letter-spacing:0.4px">40,972,801</div>
<div class="t" style="left:309px;top:134px;font-size:10.2px;color:#dcdcdc;font-weight:bold">FPS:</div>
<div class="t" style="left:347px;top:134px;font-size:11px;color:#dcdcdc;font-weight:bold">Inactive</div>
<div class="a" style="left:1700px;top:52px;width:188px;height:776px;background:#444"></div>
<div class="a" style="left:1702px;top:53px;width:186px;height:26px;background:#3b3b3b"></div>
<div class="a" style="left:1733px;top:53px;width:28px;height:26px;background:#414141"></div>
<div class="a" style="left:1732px;top:55px;width:1px;height:22px;background:#343434"></div>
<div class="a" style="left:1761px;top:55px;width:1px;height:22px;background:#343434"></div>
<div class="a" style="left:1791px;top:55px;width:1px;height:22px;background:#343434"></div>
<div class="a" style="left:1821px;top:55px;width:1px;height:22px;background:#343434"></div>
<div class="a" style="left:1850px;top:55px;width:1px;height:22px;background:#343434"></div>
<div class="a" style="left:1881px;top:55px;width:1px;height:22px;background:#343434"></div>
<svg class="a" style="left:1702px;top:53px;" width="30" height="26" viewBox="0 0 30 26"><path d="M15 6V20M8 13H22" stroke="#bdbdbd" stroke-width="2.2"/></svg>
<svg class="a" style="left:1733px;top:53px;" width="28" height="26" viewBox="0 0 28 26"><rect x="7" y="6.5" width="14" height="14" fill="none" stroke="#2ec4c0" stroke-width="1.6"/><circle cx="7" cy="6.5" r="1.5" fill="#3b3b3b" stroke="#2ec4c0" stroke-width="1"/><circle cx="21" cy="6.5" r="1.5" fill="#3b3b3b" stroke="#2ec4c0" stroke-width="1"/><circle cx="7" cy="20.5" r="1.5" fill="#3b3b3b" stroke="#2ec4c0" stroke-width="1"/><circle cx="21" cy="20.5" r="1.5" fill="#3b3b3b" stroke="#2ec4c0" stroke-width="1"/><path d="M8 19 Q9 9 20 7.5" stroke="#ddd" stroke-width="1.3" fill="none"/></svg>
<svg class="a" style="left:1762px;top:53px;" width="29" height="26" viewBox="0 0 29 26"><rect x="9" y="6" width="11" height="5" fill="#bdbdbd"/><path d="M14.5 11V14M9 17V14H20V17" stroke="#2ec4c0" stroke-width="1.2" fill="none"/><rect x="7" y="16" width="4" height="4" fill="#2ec4c0"/><rect x="18" y="16" width="4" height="4" fill="#2ec4c0"/></svg>
<svg class="a" style="left:1792px;top:53px;" width="29" height="26" viewBox="0 0 29 26"><circle cx="11.5" cy="13" r="6" fill="none" stroke="#2a9a96" stroke-width="1.2"/><circle cx="16" cy="13" r="6.5" fill="#bdbdbd"/></svg>
<svg class="a" style="left:1821px;top:53px;" width="29" height="26" viewBox="0 0 29 26"><rect x="7" y="7" width="15" height="9" fill="#bdbdbd"/><path d="M14.5 16V19M10 19.5H19" stroke="#bdbdbd" stroke-width="1.3"/></svg>
<svg class="a" style="left:1851px;top:53px;" width="30" height="26" viewBox="0 0 30 26"><circle cx="9.5" cy="9" r="3.6" fill="none" stroke="#bdbdbd" stroke-width="2"/><path d="M12 11.5L19.5 19.5" stroke="#bdbdbd" stroke-width="2.6" stroke-linecap="round"/><path d="M5 5.5L9.5 9" stroke="#3b3b3b" stroke-width="2.2"/></svg>
<div class="a" style="left:1704px;top:83px;width:160px;height:18px;background:#696969"></div>
<div class="t" style="left:1709px;top:87px;font-size:9.4px;color:#e8e8e8;">Asphalt1</div>
<div class="a" style="left:1868px;top:83px;width:18px;height:18px;background:#b6c229;border:1px solid #1a1a1a"></div>
<div class="a" style="left:1705px;top:106px;width:181px;height:17px;background:#6a6a6a"></div>
<div class="t" style="left:1707px;top:110px;font-size:9.6px;color:#d8d8d8;">Modifier List</div>
<svg class="a" style="left:1870px;top:109px;" width="12" height="10" viewBox="0 0 12 10"><path d="M2 2H10L6 8Z" fill="#eee"/></svg>
<div class="a" style="left:1704px;top:127px;width:183px;height:120px;background:#454545;border:2px solid #cfcfcf"></div>
<svg class="a" style="left:1706px;top:252px;" width="18" height="20" viewBox="0 0 18 20"><path d="M3 17L9 11" stroke="#ccc" stroke-width="1.2"/><path d="M8 8L13 3L16 6L11 11Z" fill="#e6e6e6"/><path d="M6 9L11 14" stroke="#e6e6e6" stroke-width="2"/></svg>
<div class="a" style="left:1731px;top:256px;width:1px;height:12px;background:#111"></div>
<div class="a" style="left:1736px;top:251px;width:21px;height:21px;background:#5b8fd6;border-radius:3px"></div>
<div class="a" style="left:1744px;top:254px;width:5px;height:15px;background:#2ec4c0;border:1px solid #ddd"></div>
<div class="a" style="left:1763px;top:256px;width:1px;height:12px;background:#111"></div>
<svg class="a" style="left:1768px;top:251px;" width="22" height="22" viewBox="0 0 22 22"><g fill="#3e3e3e" stroke="#333" stroke-width="1"><circle cx="7" cy="5.5" r="4"/><circle cx="12" cy="16" r="4.5"/><circle cx="16" cy="11" r="3.5"/></g></svg>
<svg class="a" style="left:1793px;top:252px;" width="16" height="20" viewBox="0 0 16 20"><rect x="3" y="5" width="10" height="13" fill="none" stroke="#333" stroke-width="1.4"/><path d="M1.5 4.5H14.5M6 2.5H10M6 7V16M8 7V16M10 7V16" stroke="#333" stroke-width="1.3"/></svg>
<div class="a" style="left:1816px;top:256px;width:1px;height:12px;background:#111"></div>
<svg class="a" style="left:1823px;top:252px;" width="22" height="20" viewBox="0 0 22 20"><rect x="1" y="2" width="12" height="17" fill="#ddd" stroke="#555" stroke-width="0.6"/><g fill="#777"><rect x="3" y="6" width="3" height="4"/><rect x="8" y="6" width="3" height="4"/><rect x="3" y="13" width="3" height="4"/><rect x="8" y="13" width="3" height="4"/></g><path d="M9 11L18 2" stroke="#f0a820" stroke-width="2.5"/></svg>
<div class="a" style="left:1709px;top:292px;width:174px;height:1px;background:#555"></div>
<div class="a" style="left:1788px;top:290px;width:14px;height:4px;background:#444"></div>
<svg class="a" style="left:1788px;top:289px;" width="14" height="6" viewBox="0 0 14 6"><path d="M1 1Q2.5 5 4 1Q5.5 5 7 1Q8.5 5 10 1Q11.5 5 13 1" stroke="#cfcfcf" stroke-width="1" fill="none"/></svg>
<div class="a" style="left:1881px;top:300px;width:6px;height:525px;background:#393939;border-radius:3px"></div>
<div class="a" style="left:1882px;top:300px;width:4px;height:260px;background:#525252;border-radius:2px"></div>
<div class="a" style="left:1888px;top:0px;width:32px;height:933px;background:#444"></div>
<div class="a" style="left:1887px;top:52px;width:1px;height:780px;background:#3a3a3a"></div>
<svg class="a" style="left:1894px;top:16px;" width="20" height="20" viewBox="0 0 20 20"><path d="M10 1.5L18 6V14L10 18.5L2 14V6Z M2 6L10 10.5L18 6 M10 10.5V18.5" fill="none" stroke="#8a8a8a" stroke-width="0.9"/><path d="M10 4.5Q14 8 13.5 11.5Q13 15 10 15Q7 15 6.5 11.5Q6.5 9 8.5 7.5Q8.5 10 10 11Q9 8 10 4.5Z" fill="none" stroke="#d83030" stroke-width="1.3"/></svg>
<svg class="a" style="left:1894px;top:45px;" width="20" height="20" viewBox="0 0 20 20"><path d="M10 1.5L18 6V14L10 18.5L2 14V6Z M2 6L10 10.5L18 6 M10 10.5V18.5" fill="none" stroke="#8a8a8a" stroke-width="0.9"/><path d="M10 4.5Q14 8 13.5 11.5Q13 15 10 15Q7 15 6.5 11.5Q6.5 9 8.5 7.5Q8.5 10 10 11Q9 8 10 4.5Z" fill="none" stroke="#3a88d8" stroke-width="1.3"/></svg>
<svg class="a" style="left:1894px;top:72px;" width="20" height="20" viewBox="0 0 20 20"><circle cx="10" cy="10" r="8.3" fill="none" stroke="#d03030" stroke-width="1.5"/><path d="M10 4Q14.5 8 14 11.5Q13.5 15.5 10 15.5Q6.5 15.5 6 11.5Q6 9 8.5 7Q8.5 10 10 11Q9 7.5 10 4Z" fill="none" stroke="#d03030" stroke-width="1.3"/></svg>
<svg class="a" style="left:1894px;top:101px;" width="20" height="20" viewBox="0 0 20 20"><circle cx="10" cy="10" r="8.3" fill="none" stroke="#3a88d8" stroke-width="1.5"/><path d="M10 4Q14 9 13 12Q11 15 8 13Q6 10 10 4Z" fill="none" stroke="#3a88d8" stroke-width="1.3"/></svg>
<svg class="a" style="left:1894px;top:130px;" width="20" height="20" viewBox="0 0 20 20"><circle cx="10" cy="10" r="8.3" fill="none" stroke="#e0b020" stroke-width="1.5"/><circle cx="11" cy="7" r="3" fill="none" stroke="#e0b020" stroke-width="1.3"/><circle cx="7" cy="12" r="2.5" fill="none" stroke="#e0b020" stroke-width="1.3"/><circle cx="12" cy="14" r="1.5" fill="none" stroke="#e0b020" stroke-width="1.1"/></svg>
<svg class="a" style="left:1894px;top:159px;" width="20" height="20" viewBox="0 0 20 20"><circle cx="10" cy="10" r="8.3" fill="none" stroke="#c040a8" stroke-width="1.5"/><rect x="6" y="7" width="7" height="7" fill="none" stroke="#c040a8" stroke-width="1.3"/><path d="M8 5H15V12" fill="none" stroke="#c040a8" stroke-width="1.3"/></svg>
<div class="a" style="left:1891px;top:183px;width:27px;height:2px;background:#1e1e1e"></div>
<svg class="a" style="left:1894px;top:194px;" width="20" height="20" viewBox="0 0 20 20"><g fill="none" stroke="#22b050" stroke-width="1.4"><path d="M10 1L19 10L10 19L1 10Z"/><circle cx="10" cy="10" r="3"/><circle cx="6" cy="10" r="1.5"/><circle cx="14" cy="10" r="1.5"/><circle cx="10" cy="6" r="1.5"/><circle cx="10" cy="14" r="1.5"/></g></svg>
<svg class="a" style="left:1894px;top:224px;" width="20" height="20" viewBox="0 0 20 20"><path d="M2 10H17M12 5L17 10L12 15M3 5V15" fill="none" stroke="#22b050" stroke-width="1.5"/></svg>
<svg class="a" style="left:1894px;top:251px;" width="20" height="20" viewBox="0 0 20 20"><rect x="2" y="2" width="16" height="16" fill="none" stroke="#22b050" stroke-width="1.4"/><rect x="10" y="2" width="8" height="8" fill="#22b050" opacity="0.5"/><rect x="2" y="10" width="8" height="8" fill="#22b050" opacity="0.5"/><path d="M10 2V18M2 10H18" stroke="#22b050" stroke-width="1.2"/></svg>
<svg class="a" style="left:1894px;top:279px;" width="20" height="20" viewBox="0 0 20 20"><g stroke="#22b050" stroke-width="1.2"><path d="M10 1V19M1 10H19M3.5 3.5L16.5 16.5M16.5 3.5L3.5 16.5M6 1.5L14 18.5M14 1.5L6 18.5M1.5 6L18.5 14M1.5 14L18.5 6"/></g></svg>
<svg class="a" style="left:1913px;top:215px;" width="5" height="5" viewBox="0 0 5 5"><path d="M5 0V5H0Z" fill="#ccc"/></svg>
<svg class="a" style="left:1913px;top:243px;" width="5" height="5" viewBox="0 0 5 5"><path d="M5 0V5H0Z" fill="#ccc"/></svg>
<div class="a" style="left:1891px;top:304px;width:27px;height:2px;background:#1e1e1e"></div>
<svg class="a" style="left:1894px;top:316px;" width="20" height="20" viewBox="0 0 20 20"><path d="M5 3L16 10L5 17Z" fill="#a8b4c4"/></svg>
<svg class="a" style="left:1894px;top:345px;" width="20" height="20" viewBox="0 0 20 20"><rect x="4" y="3" width="4.5" height="14" fill="#a8b4c4"/><rect x="11.5" y="3" width="4.5" height="14" fill="#a8b4c4"/></svg>
<svg class="a" style="left:1894px;top:372px;" width="20" height="20" viewBox="0 0 20 20"><rect x="3.5" y="3.5" width="13" height="13" fill="#a8b4c4"/></svg>
<svg class="a" style="left:1894px;top:401px;" width="20" height="20" viewBox="0 0 20 20"><circle cx="10" cy="10" r="7.5" fill="none" stroke="#a8b4c4" stroke-width="1.6"/><path d="M7.5 6L14 10L7.5 14Z" fill="#a8b4c4"/></svg>
<svg class="a" style="left:1894px;top:430px;" width="20" height="20" viewBox="0 0 20 20"><path d="M5 6H15L14 17H6Z" fill="#a8b4c4"/><rect x="4" y="3.5" width="12" height="2" fill="#a8b4c4"/><rect x="8" y="2" width="4" height="2" fill="#a8b4c4"/></svg>
<div class="a" style="left:1891px;top:454px;width:27px;height:2px;background:#1e1e1e"></div>
<svg class="a" style="left:1894px;top:466px;" width="20" height="20" viewBox="0 0 20 20"><rect x="2" y="2" width="16" height="16" rx="1" fill="none" stroke="#d8d8d8" stroke-width="1.2"/><path d="M5 6H15M5 9.5H15M9 13H15" stroke="#d8d8d8" stroke-width="1.3"/><path d="M5 13L6.5 14.5L8 12" stroke="#f08030" stroke-width="1.2" fill="none"/></svg>
<div class="a" style="left:1891px;top:493px;width:27px;height:2px;background:#1e1e1e"></div>
<svg class="a" style="left:1894px;top:502px;" width="20" height="20" viewBox="0 0 20 20"><circle cx="10" cy="10" r="8.5" fill="none" stroke="#8c8c8c" stroke-width="1"/><path d="M4.5 13.5Q3.5 9 6 6.5Q6.5 9 8 9.5Q7 5.5 10 2.5Q11 6 13 6.5Q13.5 5 13.5 3.5Q17 7 16 12Q15 16.5 10 16.5Q5.5 16.5 4.5 13.5Z" fill="#f59a10"/><ellipse cx="10" cy="12.5" rx="2.6" ry="2.2" fill="#3a3a3a"/></svg>
<svg class="a" style="left:1894px;top:531px;" width="20" height="20" viewBox="0 0 20 20"><circle cx="10" cy="10" r="8.5" fill="none" stroke="#8c8c8c" stroke-width="1"/><path d="M4.5 13.5Q3.5 9 6 6.5Q6.5 9 8 9.5Q7 5.5 10 2.5Q11 6 13 6.5Q13.5 5 13.5 3.5Q17 7 16 12Q15 16.5 10 16.5Q5.5 16.5 4.5 13.5Z" fill="#f59a10"/><ellipse cx="10" cy="12.5" rx="2.6" ry="2.2" fill="#3a3a3a"/><rect x="7.5" y="10.5" width="5" height="5.5" fill="#e53e20"/><path d="M8.5 11.5L11.5 15M11.5 11.5L8.5 15" stroke="#7a1a10" stroke-width="0.7"/></svg>
<svg class="a" style="left:1894px;top:559px;" width="20" height="20" viewBox="0 0 20 20"><circle cx="10" cy="10" r="8.5" fill="none" stroke="#8c8c8c" stroke-width="1"/><g fill="#f59a10"><path d="M7 13L8.5 2.5L11.5 2.8Z"/><path d="M7 13L13.5 3.5L16 5.5Z"/><path d="M7 13L17 7.5L18.2 10.5Z"/><path d="M7 13L18.2 12.5L17 15.5Z"/><rect x="3" y="5" width="2.5" height="2.5"/></g><path d="M2.5 10.5Q2.5 17.5 9.5 17.5L11.5 14L6.5 11.5Z" fill="#e53e20"/></svg>
<svg class="a" style="left:1894px;top:587px;" width="20" height="20" viewBox="0 0 20 20"><circle cx="10" cy="10" r="8.5" fill="none" stroke="#8c8c8c" stroke-width="1"/><g fill="#f59a10"><path d="M7 13L8.5 2.5L11.5 2.8Z"/><path d="M7 13L13.5 3.5L16 5.5Z"/><path d="M7 13L17 7.5L18.2 10.5Z"/><path d="M7 13L18.2 12.5L17 15.5Z"/><rect x="3" y="5" width="2.5" height="2.5"/></g><rect x="6" y="12" width="5" height="5" fill="#e53e20"/></svg>
<svg class="a" style="left:1894px;top:616px;" width="20" height="20" viewBox="0 0 20 20"><circle cx="10" cy="10" r="8.5" fill="none" stroke="#8c8c8c" stroke-width="1"/><path d="M5 13Q3 11 4.5 8.5Q3.5 5 7 4Q9 2 12 3.5Q16 3 16 7Q17.5 10 15 12.5Q14 14 11 13.5Z" fill="#3a3a3a" stroke="#e8e8e8" stroke-width="1.4"/><path d="M7.5 7Q10 5.5 12 8Q10 10 8 11" fill="none" stroke="#e8e8e8" stroke-width="1.1"/><path d="M5.5 15.5H14.5" stroke="#e0e0e0" stroke-width="1.4"/></svg>
<svg class="a" style="left:1913px;top:635px;" width="4" height="4" viewBox="0 0 4 4"><path d="M4 0V4H0Z" fill="#ccc"/></svg>
<svg class="a" style="left:1894px;top:644px;" width="20" height="20" viewBox="0 0 20 20"><circle cx="10" cy="10" r="8.5" fill="none" stroke="#8c8c8c" stroke-width="1"/><path d="M7 3.5Q12 2 14.5 4.5Q15 7 10 8Q5 9 6.5 11Q9 12.5 14 11Q17 12 14 14.5Q11 16 8 15" fill="none" stroke="#e8e8e8" stroke-width="1.5"/><rect x="2.5" y="14" width="4" height="3" fill="#e8a050"/><rect x="7" y="14" width="1.5" height="3" fill="#e53e20"/></svg>
<svg class="a" style="left:1894px;top:673px;" width="20" height="20" viewBox="0 0 20 20"><circle cx="10" cy="10" r="8.5" fill="none" stroke="#8c8c8c" stroke-width="1"/><path d="M10 3Q15 8 14.5 11.5Q14 15 10 15Q6 15 5.5 11.5Q5.5 8.5 8 6.5Q8.5 9 10 9.5Q9 6 10 3Z" fill="#f59a10"/><ellipse cx="10" cy="12" rx="1.8" ry="2" fill="#3a3a3a"/><path d="M6.5 17H13.5" stroke="#e8e8e8" stroke-width="1.3"/></svg>
<svg class="a" style="left:1894px;top:701px;" width="20" height="20" viewBox="0 0 20 20"><circle cx="10" cy="10" r="8.5" fill="none" stroke="#8c8c8c" stroke-width="1"/><path d="M4 8Q4 5 7 5Q9 3 12 4.5Q16 4 16 7.5Q14 8.5 12 8" fill="none" stroke="#e8e8e8" stroke-width="1.5"/><path d="M6 13Q5 10 9 10Q11 8.5 14 10.5Q17 11 15 13.5Z" fill="none" stroke="#e8e8e8" stroke-width="1.5"/><path d="M4 16H16" stroke="#7ab040" stroke-width="1.8"/></svg>
<svg class="a" style="left:1894px;top:730px;" width="20" height="20" viewBox="0 0 20 20"><circle cx="10" cy="10" r="8.5" fill="none" stroke="#8c8c8c" stroke-width="1"/><path d="M5 4.5L17.5 17.5L8.5 12.5Z" fill="#f59a10"/><path d="M7 7L14 14.5L9 11.5Z" fill="#f0f0f0"/><path d="M4.5 4L7 3L8 6Z" fill="#aaa"/></svg>
<div class="a" style="left:1891px;top:755px;width:27px;height:2px;background:#1e1e1e"></div>
<svg class="a" style="left:1894px;top:766px;" width="20" height="20" viewBox="0 0 20 20"><circle cx="10" cy="10" r="8.5" fill="none" stroke="#8a8a8a" stroke-width="1"/><path d="M7 2Q10 6 9.5 8Q9 10 7 10Q5 10 4.5 8Q4.5 6 7 2Z M13 6Q16 10 15.5 12Q15 14 13 14Q11 14 10.5 12Q10.5 10 13 6Z" fill="#30a8f0"/><path d="M2 19L4 15L8 13L12 16L18 15V19Z" fill="#30a8f0"/></svg>
<svg class="a" style="left:1894px;top:794px;" width="20" height="20" viewBox="0 0 20 20"><circle cx="10" cy="10" r="8.5" fill="none" stroke="#8a8a8a" stroke-width="1"/><path d="M7 7L10 3H13L14 7V16H7Z" fill="#e8e8e8"/><rect x="8" y="9" width="3" height="6" fill="#888"/><ellipse cx="10" cy="17" rx="7" ry="2" fill="#ddd"/></svg>
<svg class="a" style="left:1894px;top:823px;" width="20" height="20" viewBox="0 0 20 20"><circle cx="10" cy="10" r="8.5" fill="none" stroke="#8a8a8a" stroke-width="1"/><rect x="5" y="7" width="9" height="10" fill="#e8a020" stroke="#eee" stroke-width="1.2"/><path d="M4.5 7Q5 3 9.5 3.5Q14 3 14.5 7Z" fill="#f0f0f0"/><path d="M14 9H16V14H14" fill="none" stroke="#eee" stroke-width="1.2"/></svg>
<svg class="a" style="left:1894px;top:851px;" width="20" height="20" viewBox="0 0 20 20"><circle cx="10" cy="10" r="8.5" fill="none" stroke="#8a8a8a" stroke-width="1"/><path d="M3 9H15Q15 16 9 16Q3 16 3 9Z" fill="#eee"/><ellipse cx="9" cy="9" rx="6" ry="2" fill="#6a3a20"/><path d="M15 10.5Q18 10.5 17 13Q16 14 14 14" fill="none" stroke="#eee" stroke-width="1.2"/><path d="M3 17.5H15" stroke="#ddd" stroke-width="1"/></svg>
<svg class="a" style="left:1895px;top:883px;" width="18" height="6" viewBox="0 0 18 6"><path d="M1 5Q9 -1 17 4" stroke="#bbb" stroke-width="1" fill="none"/></svg>
<svg class="a" style="left:34px;top:832px;" width="3" height="52" viewBox="0 0 3 52"><path d="M0.5 0 L2 1.5 L0.5 3 L2 4.5 L0.5 6 L2 7.5 L0.5 9 L2 10.5 L0.5 12 L2 13.5 L0.5 15 L2 16.5 L0.5 18 L2 19.5 L0.5 21 L2 22.5 L0.5 24 L2 25.5 L0.5 27 L2 28.5 L0.5 30 L2 31.5 L0.5 33 L2 34.5 L0.5 36 L2 37.5 L0.5 39 L2 40.5 L0.5 42 L2 43.5 L0.5 45 L2 46.5 L0.5 48 L2 49.5 L0.5 51 L2 52.5 L0.5 54" fill="none" stroke="#9a9a9a" stroke-width="0.8"/></svg>
<div class="a" style="left:40px;top:831px;width:15px;height:15px;background:#555;border-radius:3px"></div>
<svg class="a" style="left:40px;top:831px;" width="15" height="15" viewBox="0 0 15 15"><path d="M9.5 4L5.5 7.5L9.5 11" stroke="#999" stroke-width="1.2" fill="none"/></svg>
<div class="a" style="left:56px;top:831px;width:115px;height:15px;background:#5a5a5a;border-radius:3px"></div>
<div class="t" style="left:97px;top:833px;font-size:10px;color:#c8c8c8;">0 / 100</div>
<div class="a" style="left:173px;top:831px;width:13px;height:15px;background:#555;border-radius:3px"></div>
<svg class="a" style="left:173px;top:831px;" width="13" height="15" viewBox="0 0 13 15"><path d="M4.5 4L8.5 7.5L4.5 11" stroke="#999" stroke-width="1.2" fill="none"/></svg>
<div class="a" style="left:40px;top:850px;width:1848px;height:1px;background:#222"></div>
<div class="a" style="left:86px;top:851px;width:1756px;height:34px;background:#2d2d2d"></div>
<div class="a" style="left:86px;top:873px;width:1756px;height:1px;background:#3c3c3c"></div>
<svg class="a" style="left:86px;top:851px;" width="1756" height="34" viewBox="0 0 1756 34"><rect x="7.7" y="0" width="1" height="10" fill="#7a7a7a"/><rect x="25.1" y="0" width="1" height="10" fill="#7a7a7a"/><rect x="42.5" y="0" width="1" height="10" fill="#7a7a7a"/><rect x="59.9" y="0" width="1" height="10" fill="#7a7a7a"/><rect x="77.3" y="0" width="1" height="10" fill="#7a7a7a"/><rect x="94.7" y="0" width="1" height="10" fill="#7a7a7a"/><rect x="112.1" y="0" width="1" height="10" fill="#7a7a7a"/><rect x="129.5" y="0" width="1" height="10" fill="#7a7a7a"/><rect x="146.9" y="0" width="1" height="10" fill="#7a7a7a"/><rect x="164.3" y="0" width="1" height="10" fill="#7a7a7a"/><rect x="181.7" y="0" width="1" height="10" fill="#7a7a7a"/><rect x="199.1" y="0" width="1" height="10" fill="#7a7a7a"/><rect x="216.5" y="0" width="1" height="10" fill="#7a7a7a"/><rect x="233.9" y="0" width="1" height="10" fill="#7a7a7a"/><rect x="251.3" y="0" width="1" height="10" fill="#7a7a7a"/><rect x="268.7" y="0" width="1" height="10" fill="#7a7a7a"/><rect x="286.1" y="0" width="1" height="10" fill="#7a7a7a"/><rect x="303.5" y="0" width="1" height="10" fill="#7a7a7a"/><rect x="320.9" y="0" width="1" height="10" fill="#7a7a7a"/><rect x="338.3" y="0" width="1" height="10" fill="#7a7a7a"/><rect x="355.7" y="0" width="1" height="10" fill="#7a7a7a"/><rect x="373.1" y="0" width="1" height="10" fill="#7a7a7a"/><rect x="390.5" y="0" width="1" height="10" fill="#7a7a7a"/><rect x="407.9" y="0" width="1" height="10" fill="#7a7a7a"/><rect x="425.3" y="0" width="1" height="10" fill="#7a7a7a"/><rect x="442.7" y="0" width="1" height="10" fill="#7a7a7a"/><rect x="460.1" y="0" width="1" height="10" fill="#7a7a7a"/><rect x="477.5" y="0" width="1" height="10" fill="#7a7a7a"/><rect x="494.9" y="0" width="1" height="10" fill="#7a7a7a"/><rect x="512.3" y="0" width="1" height="10" fill="#7a7a7a"/><rect x="529.7" y="0" width="1" height="10" fill="#7a7a7a"/><rect x="547.1" y="0" width="1" height="10" fill="#7a7a7a"/><rect x="564.5" y="0" width="1" height="10" fill="#7a7a7a"/><rect x="581.9" y="0" width="1" height="10" fill="#7a7a7a"/><rect x="599.3" y="0" width="1" height="10" fill="#7a7a7a"/><rect x="616.7" y="0" width="1" height="10" fill="#7a7a7a"/><rect x="634.1" y="0" width="1" height="10" fill="#7a7a7a"/><rect x="651.5" y="0" width="1" height="10" fill="#7a7a7a"/><rect x="668.9" y="0" width="1" height="10" fill="#7a7a7a"/><rect x="686.3" y="0" width="1" height="10" fill="#7a7a7a"/><rect x="703.7" y="0" width="1" height="10" fill="#7a7a7a"/><rect x="721.1" y="0" width="1" height="10" fill="#7a7a7a"/><rect x="738.5" y="0" width="1" height="10" fill="#7a7a7a"/><rect x="755.9" y="0" width="1" height="10" fill="#7a7a7a"/><rect x="773.3" y="0" width="1" height="10" fill="#7a7a7a"/><rect x="790.7" y="0" width="1" height="10" fill="#7a7a7a"/><rect x="808.1" y="0" width="1" height="10" fill="#7a7a7a"/><rect x="825.5" y="0" width="1" height="10" fill="#7a7a7a"/><rect x="842.9" y="0" width="1" height="10" fill="#7a7a7a"/><rect x="860.3" y="0" width="1" height="10" fill="#7a7a7a"/><rect x="877.7" y="0" width="1" height="10" fill="#7a7a7a"/><rect x="895.1" y="0" width="1" height="10" fill="#7a7a7a"/><rect x="912.5" y="0" width="1" height="10" fill="#7a7a7a"/><rect x="929.9" y="0" width="1" height="10" fill="#7a7a7a"/><rect x="947.3" y="0" width="1" height="10" fill="#7a7a7a"/><rect x="964.7" y="0" width="1" height="10" fill="#7a7a7a"/><rect x="982.1" y="0" width="1" height="10" fill="#7a7a7a"/><rect x="999.5" y="0" width="1" height="10" fill="#7a7a7a"/><rect x="1016.9" y="0" width="1" height="10" fill="#7a7a7a"/><rect x="1034.3" y="0" width="1" height="10" fill="#7a7a7a"/><rect x="1051.7" y="0" width="1" height="10" fill="#7a7a7a"/><rect x="1069.1" y="0" width="1" height="10" fill="#7a7a7a"/><rect x="1086.5" y="0" width="1" height="10" fill="#7a7a7a"/><rect x="1103.9" y="0" width="1" height="10" fill="#7a7a7a"/><rect x="1121.3" y="0" width="1" height="10" fill="#7a7a7a"/><rect x="1138.7" y="0" width="1" height="10" fill="#7a7a7a"/><rect x="1156.1" y="0" width="1" height="10" fill="#7a7a7a"/><rect x="1173.5" y="0" width="1" height="10" fill="#7a7a7a"/><rect x="1190.9" y="0" width="1" height="10" fill="#7a7a7a"/><rect x="1208.3" y="0" width="1" height="10" fill="#7a7a7a"/><rect x="1225.7" y="0" width="1" height="10" fill="#7a7a7a"/><rect x="1243.1" y="0" width="1" height="10" fill="#7a7a7a"/><rect x="1260.5" y="0" width="1" height="10" fill="#7a7a7a"/><rect x="1277.9" y="0" width="1" height="10" fill="#7a7a7a"/><rect x="1295.3" y="0" width="1" height="10" fill="#7a7a7a"/><rect x="1312.7" y="0" width="1" height="10" fill="#7a7a7a"/><rect x="1330.1" y="0" width="1" height="10" fill="#7a7a7a"/><rect x="1347.5" y="0" width="1" height="10" fill="#7a7a7a"/><rect x="1364.9" y="0" width="1" height="10" fill="#7a7a7a"/><rect x="1382.3" y="0" width="1" height="10" fill="#7a7a7a"/><rect x="1399.7" y="0" width="1" height="10" fill="#7a7a7a"/><rect x="1417.1" y="0" width="1" height="10" fill="#7a7a7a"/><rect x="1434.5" y="0" width="1" height="10" fill="#7a7a7a"/><rect x="1451.9" y="0" width="1" height="10" fill="#7a7a7a"/><rect x="1469.3" y="0" width="1" height="10" fill="#7a7a7a"/><rect x="1486.7" y="0" width="1" height="10" fill="#7a7a7a"/><rect x="1504.1" y="0" width="1" height="10" fill="#7a7a7a"/><rect x="1521.5" y="0" width="1" height="10" fill="#7a7a7a"/><rect x="1538.9" y="0" width="1" height="10" fill="#7a7a7a"/><rect x="1556.3" y="0" width="1" height="10" fill="#7a7a7a"/><rect x="1573.7" y="0" width="1" height="10" fill="#7a7a7a"/><rect x="1591.1" y="0" width="1" height="10" fill="#7a7a7a"/><rect x="1608.5" y="0" width="1" height="10" fill="#7a7a7a"/><rect x="1625.9" y="0" width="1" height="10" fill="#7a7a7a"/><rect x="1643.3" y="0" width="1" height="10" fill="#7a7a7a"/><rect x="1660.7" y="0" width="1" height="10" fill="#7a7a7a"/><rect x="1678.1" y="0" width="1" height="10" fill="#7a7a7a"/><rect x="1695.5" y="0" width="1" height="10" fill="#7a7a7a"/><rect x="1712.9" y="0" width="1" height="10" fill="#7a7a7a"/><rect x="1730.3" y="0" width="1" height="10" fill="#7a7a7a"/><rect x="1747.7" y="0" width="1" height="10" fill="#7a7a7a"/></svg>
<div class="t" style="left:141.2px;top:864px;width:80px;text-align:center;font-size:9px;color:#cfcfcf">5</div>
<div class="t" style="left:228.2px;top:864px;width:80px;text-align:center;font-size:9px;color:#cfcfcf">10</div>
<div class="t" style="left:315.2px;top:864px;width:80px;text-align:center;font-size:9px;color:#cfcfcf">15</div>
<div class="t" style="left:402.2px;top:864px;width:80px;text-align:center;font-size:9px;color:#cfcfcf">20</div>
<div class="t" style="left:489.2px;top:864px;width:80px;text-align:center;font-size:9px;color:#cfcfcf">25</div>
<div class="t" style="left:576.2px;top:864px;width:80px;text-align:center;font-size:9px;color:#cfcfcf">30</div>
<div class="t" style="left:663.2px;top:864px;width:80px;text-align:center;font-size:9px;color:#cfcfcf">35</div>
<div class="t" style="left:750.2px;top:864px;width:80px;text-align:center;font-size:9px;color:#cfcfcf">40</div>
<div class="t" style="left:837.2px;top:864px;width:80px;text-align:center;font-size:9px;color:#cfcfcf">45</div>
<div class="t" style="left:924.2px;top:864px;width:80px;text-align:center;font-size:9px;color:#cfcfcf">50</div>
<div class="t" style="left:1011.2px;top:864px;width:80px;text-align:center;font-size:9px;color:#cfcfcf">55</div>
<div class="t" style="left:1098.2px;top:864px;width:80px;text-align:center;font-size:9px;color:#cfcfcf">60</div>
<div class="t" style="left:1185.2px;top:864px;width:80px;text-align:center;font-size:9px;color:#cfcfcf">65</div>
<div class="t" style="left:1272.2px;top:864px;width:80px;text-align:center;font-size:9px;color:#cfcfcf">70</div>
<div class="t" style="left:1359.2px;top:864px;width:80px;text-align:center;font-size:9px;color:#cfcfcf">75</div>
<div class="t" style="left:1446.2px;top:864px;width:80px;text-align:center;font-size:9px;color:#cfcfcf">80</div>
<div class="t" style="left:1533.2px;top:864px;width:80px;text-align:center;font-size:9px;color:#cfcfcf">85</div>
<div class="t" style="left:1620.2px;top:864px;width:80px;text-align:center;font-size:9px;color:#cfcfcf">90</div>
<div class="t" style="left:1707.2px;top:864px;width:80px;text-align:center;font-size:9px;color:#cfcfcf">95</div>
<div class="t" style="left:1794.2px;top:864px;width:80px;text-align:center;font-size:9px;color:#cfcfcf">100</div>
<div class="a" style="left:91px;top:852px;width:7px;height:21px;background:#9c8f22"></div>
<div class="t" style="left:91px;top:864px;font-size:9px;color:#e0d060;">0</div>
<svg class="a" style="left:50px;top:856px;" width="18" height="12" viewBox="0 0 18 12"><path d="M2 2H4M2 4.5H4M2 7H4M2 9.5H4" stroke="#bbb" stroke-width="1"/><path d="M6 8Q8 1 10 5Q12 10 15 4" stroke="#2ec4c0" stroke-width="1.4" fill="none"/></svg>
<div class="a" style="left:4px;top:889px;width:91px;height:21px;background:#e2c8c8;border:1px solid #bbb"></div>
<div class="a" style="left:4px;top:911px;width:91px;height:22px;background:#ffffff;border:1px solid #bbb"></div>
<div class="t" style="left:8px;top:916px;font-size:9.9px;color:#8a8a8a;font-family:'Liberation Mono',monospace">Scripting Mini</div>
<div class="a" style="left:99px;top:887px;width:2px;height:46px;background:#2c2c2c"></div>
<div class="t" style="left:110px;top:896px;font-size:9.6px;color:#e0e0e0;">FBXplugin File Export  -  Initialization.</div>
<div class="a" style="left:107px;top:918px;width:422px;height:10px;background:#5a5a5a;border:1px solid #cfcfcf"></div>
<div class="a" style="left:536px;top:915px;width:68px;height:16px;background:#5a5a5a;border-radius:3px"></div>
<div class="t" style="left:555px;top:918px;font-size:9px;color:#d0d0d0;">Cancel</div>
<svg class="a" style="left:1089px;top:891px;" width="20" height="19" viewBox="0 0 20 19"><path d="M2 5V2H5M13 2H16V5M2 13V16H5M13 16H16V13" stroke="#ccc" stroke-width="1.2" fill="none"/><path d="M5 11L9 6L13 11Z" fill="#2ec4c0"/><rect x="4" y="10" width="9" height="3" fill="#ddd"/><path d="M16 18H19V15Z" fill="#ccc"/></svg>
<svg class="a" style="left:1116px;top:892px;" width="13" height="16" viewBox="0 0 13 16"><path d="M3.5 7V4.5Q3.5 1.5 6.5 1.5Q9.5 1.5 9.5 4.5V7" stroke="#d8d8d8" stroke-width="1.6" fill="none"/><rect x="2" y="7" width="9" height="8" fill="#d8d8d8"/><circle cx="6.5" cy="10.5" r="1.3" fill="#444"/></svg>
<svg class="a" style="left:1140px;top:893px;" width="15" height="15" viewBox="0 0 15 15"><rect x="1.5" y="1.5" width="12" height="12" fill="none" stroke="#d8d8d8" stroke-width="1.3"/><path d="M7.5 3.5L11.5 7.5L7.5 11.5L3.5 7.5Z" fill="none" stroke="#d8d8d8" stroke-width="1.2"/><circle cx="7.5" cy="7.5" r="1.3" fill="#d8d8d8"/></svg>
<div class="t" style="left:1161px;top:895px;font-size:10px;color:#d0d0d0;">X:</div>
<div class="a" style="left:1175px;top:892px;width:53px;height:16px;background:#505050"></div>
<div class="t" style="left:1177px;top:896px;font-size:9.5px;color:#727272;">53.98</div>
<div class="t" style="left:1239px;top:895px;font-size:10px;color:#d0d0d0;">Y:</div>
<div class="a" style="left:1252px;top:892px;width:53px;height:16px;background:#505050"></div>
<div class="t" style="left:1254px;top:896px;font-size:9.5px;color:#727272;">-440.546</div>
<div class="t" style="left:1316px;top:895px;font-size:10px;color:#d0d0d0;">Z:</div>
<div class="a" style="left:1329px;top:892px;width:53px;height:16px;background:#505050"></div>
<div class="t" style="left:1331px;top:896px;font-size:9.5px;color:#727272;">0.0</div>
<div class="t" style="left:1396px;top:895px;font-size:9.8px;color:#dcdcdc;">Grid = 10.0</div>
<div class="a" style="left:1254px;top:915px;width:1px;height:17px;background:#1a1a1a"></div>
<div class="a" style="left:1260px;top:914px;width:18px;height:19px;background:#5a5a5a;border-radius:2px"></div>
<svg class="a" style="left:1260px;top:914px;" width="18" height="19" viewBox="0 0 18 19"><path d="M9 3L14.5 5V10Q14 14.5 9 16.5Q4 14.5 3.5 10V5Z" fill="#ddd"/><path d="M9 4V9.5H14V10Q13.5 14 9 15.5V9.5H4V5.5L9 4" fill="#333"/></svg>
<div class="t" style="left:1283px;top:918px;font-size:10px;color:#dcdcdc;">Enabled:</div>
<svg class="a" style="left:1324px;top:918px;" width="11" height="11" viewBox="0 0 11 11"><circle cx="5.5" cy="5.5" r="4.3" fill="#3cd048"/></svg>
<div class="a" style="left:1339px;top:914px;width:18px;height:19px;background:#5a5a5a;border-radius:2px"></div>
<svg class="a" style="left:1339px;top:914px;" width="18" height="19" viewBox="0 0 18 19"><circle cx="9" cy="9.5" r="6" fill="#f0f0f0"/><text x="9" y="13" text-anchor="middle" font-family="Liberation Sans" font-size="9" font-weight="bold" fill="#444">0</text></svg>
<div class="a" style="left:1361px;top:915px;width:1px;height:17px;background:#1a1a1a"></div>
<svg class="a" style="left:1369px;top:916px;" width="14" height="14" viewBox="0 0 14 14"><path d="M7 1.5L12.5 4.5V10L7 13L1.5 10V4.5Z M1.5 4.5L7 7.5L12.5 4.5 M7 7.5V13" stroke="#ccc" stroke-width="1.1" fill="none"/></svg>
<div class="t" style="left:1390px;top:918px;font-size:10px;color:#d8d8d8;">Add Time Tag</div>
<svg class="a" style="left:1498px;top:892px;" width="110" height="16" viewBox="0 0 110 16"><g fill="#d8d8d8"><rect x="3" y="3" width="2" height="10"/><path d="M12 3V13L6 8Z M17 3V13L11 8Z"/><path d="M32 3V13L26 8Z"/><rect x="33" y="3" width="2.5" height="10"/><rect x="37" y="3" width="2.5" height="10"/><path d="M48 2L60 8L48 14Z"/><path d="M61 14H63V12Z"/><rect x="67" y="3" width="2.5" height="10"/><rect x="71" y="3" width="2.5" height="10"/><path d="M75 3V13L81 8Z"/><path d="M91 3V13L97 8Z M96 3V13L102 8Z"/><rect x="103" y="3" width="2" height="10"/></g><rect x="21" y="1" width="1" height="15" fill="#1a1a1a"/><rect x="86" y="1" width="1" height="15" fill="#1a1a1a"/></svg>
<svg class="a" style="left:1500px;top:915px;" width="16" height="10" viewBox="0 0 16 10"><path d="M6 1V9L1 5Z M10 1V9L15 5Z" fill="#d8d8d8"/></svg>
<div class="a" style="left:1519px;top:912px;width:68px;height:16px;background:#5a5a5a;border-left:2px solid #222;border-right:2px solid #222"></div>
<div class="t" style="left:1524px;top:915px;font-size:10px;color:#d0d0d0;">0</div>
<svg class="a" style="left:1577px;top:914px;" width="8" height="12" viewBox="0 0 8 12"><path d="M1 5L4 1.5L7 5Z M1 7L4 10.5L7 7Z" fill="#bbb"/></svg>
<svg class="a" style="left:1590px;top:912px;" width="18" height="16" viewBox="0 0 18 16"><circle cx="6.5" cy="6.5" r="5.5" fill="#d8d8d8"/><path d="M6.5 3V7H9" stroke="#444" stroke-width="1.2" fill="none"/><circle cx="12" cy="11" r="3.5" fill="none" stroke="#f0b020" stroke-width="2"/></svg>
<div class="a" style="left:1619px;top:890px;width:40px;height:41px;background:#575757;border-radius:3px"></div>
<svg class="a" style="left:1619px;top:890px;" width="40" height="41" viewBox="0 0 40 41"><path d="M19 8V30M8 19H30" stroke="#f0f0f0" stroke-width="4.5"/><circle cx="30" cy="26" r="3" fill="none" stroke="#2ec4c0" stroke-width="1.8"/><path d="M28 28L21 35M23 33L25 35" stroke="#2ec4c0" stroke-width="1.8"/></svg>
<div class="a" style="left:1663px;top:890px;width:43px;height:19px;background:#575757;border-radius:3px"></div>
<div class="t" style="left:1674px;top:895px;font-size:10px;color:#dadada;">Auto</div>
<div class="a" style="left:1663px;top:911px;width:43px;height:18px;background:#575757;border-radius:3px"></div>
<div class="t" style="left:1672px;top:915px;font-size:10px;color:#dadada;">Set K.</div>
<div class="a" style="left:1710px;top:890px;width:107px;height:17px;background:#5c5c5c;border-radius:2px"></div>
<div class="t" style="left:1716px;top:893px;font-size:10px;color:#dadada;">Selected</div>
<svg class="a" style="left:1802px;top:893px;" width="10" height="10" viewBox="0 0 10 10"><path d="M1 2H9L5 8Z" fill="#eee"/></svg>
<svg class="a" style="left:1711px;top:912px;" width="22" height="18" viewBox="0 0 22 18"><path d="M4 16Q4 5 8 4M18 16Q18 5 14 4" stroke="#2ec4c0" stroke-width="1.5" fill="none"/><rect x="9" y="2" width="4" height="4" fill="none" stroke="#ddd" stroke-width="1"/><circle cx="4" cy="4" r="1.5" fill="#ddd"/><circle cx="18" cy="4" r="1.5" fill="#ddd"/><path d="M22 18H19V15Z" fill="#ccc"/></svg>
<div class="a" style="left:1733px;top:911px;width:83px;height:18px;background:#5c5c5c;border-radius:3px"></div>
<div class="t" style="left:1757px;top:915px;font-size:10px;color:#dadada;">Filters...</div>
<svg class="a" style="left:1828px;top:892px;" width="17" height="16" viewBox="0 0 17 16"><circle cx="10" cy="6" r="4.5" fill="none" stroke="#e0e0e0" stroke-width="1.6"/><path d="M7 9L2 14" stroke="#e0e0e0" stroke-width="2"/></svg>
<svg class="a" style="left:1848px;top:891px;" width="17" height="17" viewBox="0 0 17 17"><circle cx="6" cy="10" r="3.5" fill="none" stroke="#e0e0e0" stroke-width="1.3"/><path d="M3.5 12.5L1 15" stroke="#e0e0e0" stroke-width="1.5"/><rect x="8" y="2" width="4" height="4" fill="#2ec4c0"/><rect x="12.5" y="2" width="4" height="4" fill="#2ec4c0"/><rect x="12.5" y="6.5" width="4" height="4" fill="#2ec4c0"/></svg>
<svg class="a" style="left:1869px;top:891px;" width="20" height="19" viewBox="0 0 20 19"><path d="M2 5V2H5M15 2H18V5M2 14V17H5M15 17H18V14" stroke="#ccc" stroke-width="1.2" fill="none"/><path d="M10 4L16 7V12L10 15L4 12V7Z" fill="#2ec4c0"/><path d="M4 7L10 10L16 7M10 10V15" stroke="#1a6e6c" stroke-width="0.8" fill="none"/></svg>
<svg class="a" style="left:1892px;top:891px;" width="20" height="19" viewBox="0 0 20 19"><path d="M13 2L18 5V10L13 13L8 10V5Z" fill="#2ec4c0"/><path d="M2 11L6 8L10 11L6 14Z" fill="#e0e0e0"/><path d="M17 18H20V15Z" fill="#ccc"/></svg>
<svg class="a" style="left:1830px;top:912px;" width="18" height="18" viewBox="0 0 18 18"><path d="M13 3L2 9L13 15" stroke="#e0e0e0" stroke-width="1.5" fill="none"/><path d="M9 6Q11 9 9 12" stroke="#e0e0e0" stroke-width="1.2" fill="none"/><path d="M18 18H15V15Z" fill="#ccc"/></svg>
<svg class="a" style="left:1850px;top:911px;" width="18" height="19" viewBox="0 0 18 19"><path d="M4 10V5Q4 4 5 4Q6 4 6 5V9V3Q6 2 7 2Q8 2 8 3V9V2.5Q8 1.5 9 1.5Q10 1.5 10 2.5V9V3.5Q10 2.5 11 2.5Q12 2.5 12 3.5V11L13.5 9Q14.5 8 15.5 9Q12 14 11 16H6Q4 14 4 10Z" fill="#e8e8e8"/><path d="M18 19H15V16Z" fill="#ccc"/></svg>
<svg class="a" style="left:1870px;top:911px;" width="19" height="19" viewBox="0 0 19 19"><circle cx="9" cy="9" r="6" fill="#e0e0e0"/><path d="M9 3A6 6 0 0 1 15 9H9Z" fill="#2ec4c0"/><path d="M1 12Q9 2 17 6" stroke="#e0e0e0" stroke-width="1.2" fill="none"/><path d="M19 19H16V16Z" fill="#ccc"/></svg>
<svg class="a" style="left:1893px;top:912px;" width="15" height="16" viewBox="0 0 15 16"><rect x="1.5" y="1.5" width="12" height="13" fill="none" stroke="#e0e0e0" stroke-width="1.3"/><path d="M3 13L12 4M8 4H12V8" stroke="#e0e0e0" stroke-width="1.6" fill="none"/><rect x="2" y="9" width="5" height="5" fill="#e0e0e0"/></svg>
</body></html>
